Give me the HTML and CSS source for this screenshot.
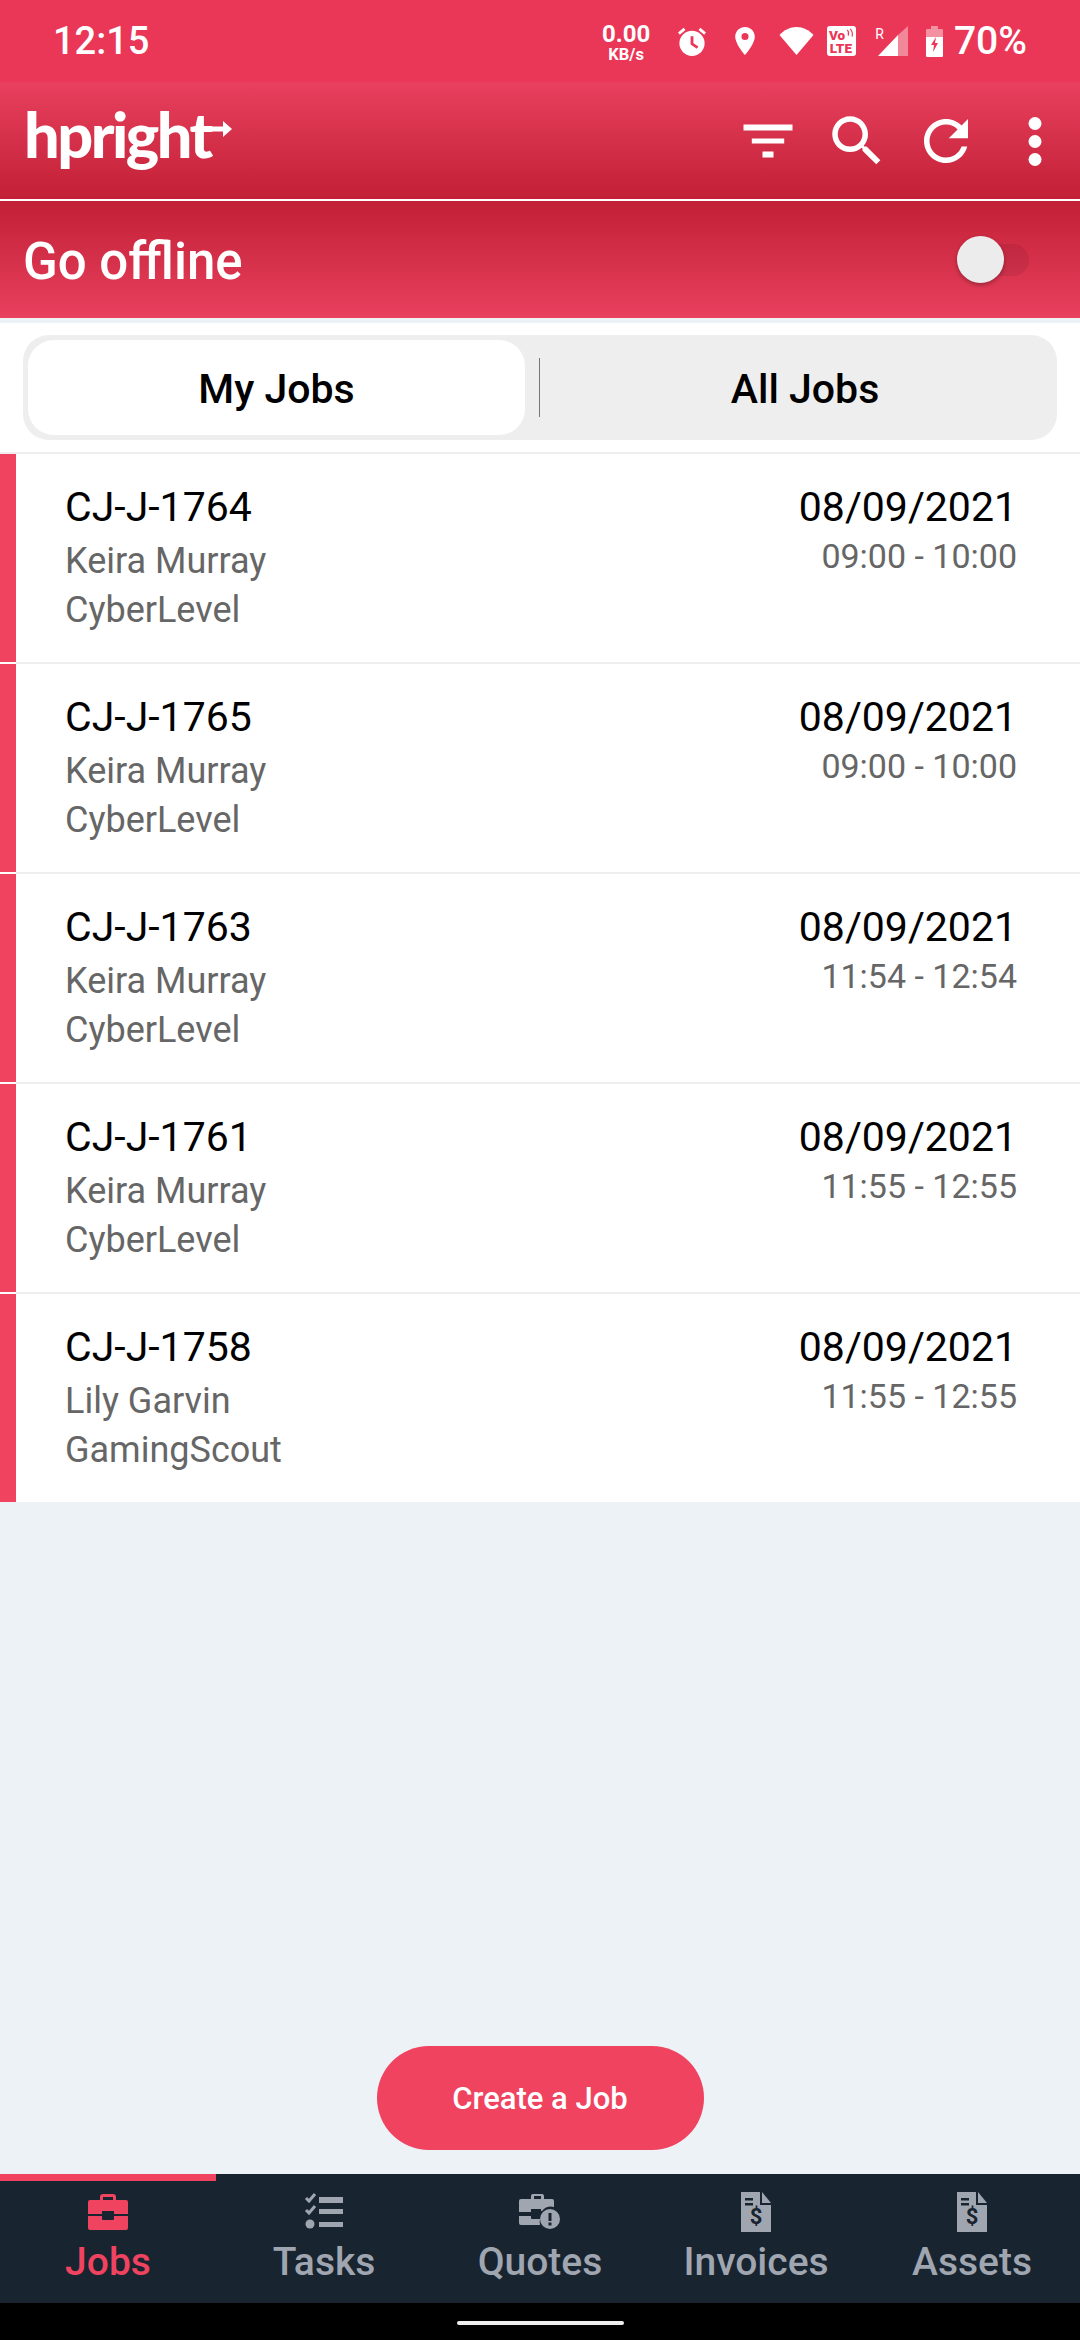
FILE: index.html
```html
<!DOCTYPE html>
<html lang="en">
<head>
    <meta charset="UTF-8">
    <meta name="viewport" content="width=device-width, initial-scale=1.0">
    <title>Jobs</title>
    <link rel="stylesheet" href="styles.css">
</head>
<body>
    <div class="app">
        <div class="status-bar">
            <span class="clock">12:15</span>
            <div class="status-icons">
                <div class="net-speed"><span class="net-value">0.00</span><span class="net-unit">KB/s</span></div>
                <svg class="st-alarm" width="28" height="29" viewBox="0 0 30 31"><circle cx="15" cy="17.500" r="13.500" fill="#fff"/><path d="M15 10v8l6 4" fill="none" stroke="#ea3757" stroke-width="3"/><path d="M1 7l6-5M29 7l-6-5" stroke="#fff" stroke-width="3" fill="none"/></svg>
                <svg class="st-pin" width="20" height="28" viewBox="0 0 21 30"><path fill-rule="evenodd" d="M10.500 0C4.700 0 0 4.600 0 10.400 0 18 10.500 30 10.500 30S21 18 21 10.400C21 4.600 16.300 0 10.500 0zm0 14a3.800 3.800 0 1 1 0-7.600 3.800 3.800 0 0 1 0 7.600z" fill="#fff"/></svg>
                <svg class="st-wifi" width="35" height="28" viewBox="0 0 34 28"><path d="M0 8C4.500 3 10.500 0 17 0s12.500 3 17 8L17 28z" fill="#fff"/></svg>
                <svg class="st-volte" width="31" height="30" viewBox="0 0 30 31"><rect width="30" height="31" rx="3" fill="#fff"/><text x="2" y="14" class="volte-text">Vo</text><path d="M21 4q2 2 1 6M24 3q3 3 2 8" stroke="#ea3757" stroke-width="1.200" fill="none"/><text x="3" y="28" class="volte-text">LTE</text></svg>
                <div class="st-signal">
                    <span class="roaming">R</span>
                    <svg width="30" height="30" viewBox="0 0 30 30"><path d="M30 0v30H20V9z" fill="#fff" opacity=".4"/><path d="M0 30L20 9v21z" fill="#fff"/></svg>
                </div>
                <svg class="st-battery" width="17" height="31" viewBox="0 0 17 31"><path d="M5 0h7v3h4a1 1 0 0 1 1 1v7H0V4a1 1 0 0 1 1-1h4z" fill="#fff" opacity=".45"/><path fill-rule="evenodd" d="M0 11h17v19a1 1 0 0 1-1 1H1a1 1 0 0 1-1-1zm10 0L5 19h3l-1 7 5-9H9z" fill="#fff"/></svg>
                <span class="battery-level">70%</span>
            </div>
        </div>

        <div class="toolbar">
            <div class="logo">
                <span class="logo-text">hpright</span>
                <svg class="logo-arrow" width="30" height="16" viewBox="0 0 30 16"><path d="M0 5.500h21V0l9 8-9 8v-5.500H0z" fill="#fff"/></svg>
            </div>
            <div class="toolbar-actions">
                <svg class="tool-icon" viewBox="0 0 66 66"><path d="M8.500 16.500h49v6h-49zM16.800 30.500h32.400v5H16.800zM27.500 43.500h11v6h-11z" fill="#fff"/></svg>
                <svg class="tool-icon" viewBox="0 0 24 24"><path d="M15.500 14h-.79l-.28-.27C15.410 12.590 16 11.110 16 9.500 16 5.910 13.090 3 9.500 3S3 5.910 3 9.500 5.910 16 9.500 16c1.610 0 3.090-.59 4.230-1.570l.27.28v.79l5 4.990L20.490 19l-4.990-5zm-6 0C7.010 14 5 11.990 5 9.500S7.010 5 9.500 5 14 7.010 14 9.500 11.990 14 9.500 14z" fill="#fff"/></svg>
                <svg class="tool-icon" viewBox="0 0 24 24"><path d="M17.650 6.350C16.200 4.900 14.210 4 12 4c-4.420 0-7.990 3.580-7.990 8s3.570 8 7.990 8c3.730 0 6.840-2.550 7.730-6h-2.080c-.82 2.330-3.040 4-5.650 4-3.310 0-6-2.690-6-6s2.690-6 6-6c1.660 0 3.140.69 4.220 1.780L13 11h7V4l-2.350 2.350z" fill="#fff"/></svg>
                <svg class="tool-icon" viewBox="0 0 66 66"><circle cx="33" cy="15.500" r="6.500" fill="#fff"/><circle cx="33" cy="33.500" r="6.500" fill="#fff"/><circle cx="33" cy="51.500" r="6.500" fill="#fff"/></svg>
            </div>
        </div>

        <div class="offline-bar">
            <span class="offline-label">Go offline</span>
            <div class="switch"><div class="switch-thumb"></div></div>
        </div>

        <div class="content">
            <div class="tabs-wrap">
                <div class="tabs">
                    <div class="tab tab-active">My Jobs</div>
                    <div class="tab-divider"></div>
                    <div class="tab tab-other">All Jobs</div>
                </div>
            </div>

            <div class="job">
                <div class="job-bar"></div>
                <div class="job-main">
                    <div class="job-left">
                        <div class="job-id">CJ-J-1764</div>
                        <div class="job-sub">Keira Murray</div>
                        <div class="job-sub">CyberLevel</div>
                    </div>
                    <div class="job-right">
                        <div class="job-date">08/09/2021</div>
                        <div class="job-time">09:00 - 10:00</div>
                    </div>
                </div>
            </div>
            <div class="job">
                <div class="job-bar"></div>
                <div class="job-main">
                    <div class="job-left">
                        <div class="job-id">CJ-J-1765</div>
                        <div class="job-sub">Keira Murray</div>
                        <div class="job-sub">CyberLevel</div>
                    </div>
                    <div class="job-right">
                        <div class="job-date">08/09/2021</div>
                        <div class="job-time">09:00 - 10:00</div>
                    </div>
                </div>
            </div>
            <div class="job">
                <div class="job-bar"></div>
                <div class="job-main">
                    <div class="job-left">
                        <div class="job-id">CJ-J-1763</div>
                        <div class="job-sub">Keira Murray</div>
                        <div class="job-sub">CyberLevel</div>
                    </div>
                    <div class="job-right">
                        <div class="job-date">08/09/2021</div>
                        <div class="job-time">11:54 - 12:54</div>
                    </div>
                </div>
            </div>
            <div class="job">
                <div class="job-bar"></div>
                <div class="job-main">
                    <div class="job-left">
                        <div class="job-id">CJ-J-1761</div>
                        <div class="job-sub">Keira Murray</div>
                        <div class="job-sub">CyberLevel</div>
                    </div>
                    <div class="job-right">
                        <div class="job-date">08/09/2021</div>
                        <div class="job-time">11:55 - 12:55</div>
                    </div>
                </div>
            </div>
            <div class="job job-last">
                <div class="job-bar"></div>
                <div class="job-main">
                    <div class="job-left">
                        <div class="job-id">CJ-J-1758</div>
                        <div class="job-sub">Lily Garvin</div>
                        <div class="job-sub">GamingScout</div>
                    </div>
                    <div class="job-right">
                        <div class="job-date">08/09/2021</div>
                        <div class="job-time">11:55 - 12:55</div>
                    </div>
                </div>
            </div>

            <button class="create-btn">Create a Job</button>
        </div>

        <nav class="bottom-nav">
            <div class="nav-item nav-active">
                <svg class="nav-icon" viewBox="0 0 42 42"><path fill-rule="evenodd" d="M13 9V6a3 3 0 0 1 3-3h10a3 3 0 0 1 3 3v3h10a2 2 0 0 1 2 2v12H27v-3H15v3H1V11a2 2 0 0 1 2-2zm3-3v3h10V6zM1 25h14v3a1 1 0 0 0 1 1h10a1 1 0 0 0 1-1v-3h14v12a2 2 0 0 1-2 2H3a2 2 0 0 1-2-2z"/></svg>
                <span class="nav-label">Jobs</span>
            </div>
            <div class="nav-item">
                <svg class="nav-icon" viewBox="0 0 42 42"><path d="M16 6h24v6H16zM16 18h24v5H16zM16 31h24v5H16z"/><path d="M3 7l3 3 6-7M3 19l3 3 6-7" fill="none" stroke-width="3" class="nav-stroke"/><circle cx="7" cy="33" r="4.500"/></svg>
                <span class="nav-label">Tasks</span>
            </div>
            <div class="nav-item">
                <svg class="nav-icon" viewBox="0 0 42 42"><path fill-rule="evenodd" d="M12 8V5a2 2 0 0 1 2-2h9a2 2 0 0 1 2 2v3h8a2 2 0 0 1 2 2v6a12 12 0 0 0-12 4h-1v-2H12v3H0V10a2 2 0 0 1 2-2zm3-3v3h7V5zM0 25h12v2a1 1 0 0 0 1 1h8a14 14 0 0 0 0 6H2a2 2 0 0 1-2-2z"/><circle cx="31" cy="28" r="10"/><rect x="29.500" y="22" width="3" height="8" class="nav-cut"/><rect x="29.500" y="31.500" width="3" height="3" class="nav-cut"/></svg>
                <span class="nav-label">Quotes</span>
            </div>
            <div class="nav-item">
                <svg class="nav-icon" viewBox="0 0 42 42"><path d="M6 1h19v13h11v27H6z"/><path d="M27 1l9 11h-9z"/><rect x="10" y="7" width="8" height="2.500" class="nav-cut"/><rect x="10" y="12" width="8" height="2.500" class="nav-cut"/><text x="21" y="33" class="nav-dollar">$</text></svg>
                <span class="nav-label">Invoices</span>
            </div>
            <div class="nav-item">
                <svg class="nav-icon" viewBox="0 0 42 42"><path d="M6 1h19v13h11v27H6z"/><path d="M27 1l9 11h-9z"/><rect x="10" y="7" width="8" height="2.500" class="nav-cut"/><rect x="10" y="12" width="8" height="2.500" class="nav-cut"/><text x="21" y="33" class="nav-dollar">$</text></svg>
                <span class="nav-label">Assets</span>
            </div>
            <div class="nav-indicator"></div>
        </nav>

        <div class="gesture-bar"><div class="gesture-pill"></div></div>
    </div>
</body>
</html>
```

FILE: styles.css
```css
* {
    box-sizing: border-box;
}
html, body {
    margin: 0;
    padding: 0;
    height: 100%;
    overflow: hidden;
}
body {
    font-family: Roboto, "Liberation Sans", sans-serif;
    background-color: #edf2f6;
}
.app {
    display: flex;
    flex-direction: column;
    width: 1080px;
    height: 2340px;
}

/* status bar */
.status-bar {
    display: flex;
    align-items: center;
    justify-content: space-between;
    height: 82px;
    padding: 0 53px 0 53px;
    background-color: #ea3757;
    color: #fff;
}
.clock {
    font-size: 38px;
    font-weight: 500;
}
.status-icons {
    display: flex;
    align-items: center;
}
.net-speed {
    display: flex;
    flex-direction: column;
    align-items: center;
    font-weight: 700;
    margin-top: 3px;
}
.net-value {
    font-size: 24px;
    line-height: 24px;
}
.net-unit {
    font-size: 16.500px;
    line-height: 17px;
}
.st-alarm {
    margin-left: 28px;
}
.st-pin {
    margin-left: 29px;
}
.st-wifi {
    margin-left: 24px;
}
.st-volte {
    margin-left: 12px;
}
.volte-text {
    font-family: Roboto, sans-serif;
    font-size: 14px;
    font-weight: 900;
    fill: #ea3757;
}
.st-signal {
    display: flex;
    align-items: flex-start;
    margin-left: 18px;
}
.st-signal svg {
    display: block;
    margin-left: -6px;
}
.roaming {
    font-size: 14px;
    line-height: 16px;
}
.st-battery {
    margin-left: 18px;
}
.battery-level {
    margin-left: 11px;
    font-size: 39px;
    font-weight: 500;
}

/* toolbar */
.toolbar {
    display: flex;
    align-items: center;
    justify-content: space-between;
    height: 119px;
    padding: 0 12px 0 24px;
    border-bottom: 2px solid #fff;
    background: linear-gradient(#e8405e, #c22036);
}
.logo {
    display: flex;
    align-items: flex-start;
    margin-bottom: 14px;
    color: #fff;
}
.logo-text {
    font-family: Lato, sans-serif;
    font-size: 63px;
    font-weight: 900;
    line-height: 70px;
    letter-spacing: -2.500px;
}
.logo-arrow {
    margin: 22px 0 0 -9px;
}
.toolbar-actions {
    display: flex;
    gap: 23px;
}
.tool-icon {
    display: block;
    width: 66px;
    height: 66px;
}

/* offline bar */
.offline-bar {
    display: flex;
    align-items: center;
    justify-content: space-between;
    height: 117px;
    padding: 0 51px 0 23px;
    background: linear-gradient(#c22036, #e8405e);
}
.offline-label {
    padding-top: 3px;
    color: #fff;
    font-size: 51px;
    font-weight: 500;
}
.switch {
    position: relative;
    width: 72px;
    height: 32px;
    border-radius: 16px;
    background-color: rgba(0, 0, 0, 0.07);
}
.switch-thumb {
    position: absolute;
    top: -8px;
    left: 0;
    width: 47px;
    height: 47px;
    border-radius: 50%;
    background-color: #ececec;
    box-shadow: 0 2px 4px rgba(0, 0, 0, 0.3);
}

/* tabs */
.content {
    flex: 1;
    display: flex;
    flex-direction: column;
    border-top: 5px solid #edf2f6;
}
.tabs-wrap {
    padding: 12px 23px;
    background-color: #fff;
    border-bottom: 2px solid #eee;
}
.tabs {
    display: flex;
    align-items: center;
    height: 105px;
    padding: 5px;
    border-radius: 26px;
    background-color: #eee;
}
.tab {
    flex: 1;
    display: flex;
    align-items: center;
    justify-content: center;
    height: 95px;
    padding-top: 2px;
    font-size: 41px;
    font-weight: 500;
    color: #000;
}
.tab-active {
    flex: none;
    width: 497px;
    border-radius: 26px;
    background-color: #fff;
}
.tab-divider {
    width: 1px;
    height: 59px;
    margin-left: 14px;
    background-color: #777;
}
.tab-other {
    padding-left: 18px;
}

/* job list */
.job {
    display: flex;
    height: 210px;
    background-color: #fff;
}
.job-bar {
    width: 16px;
    margin-bottom: 2px;
    background-color: #f0435f;
}
.job-main {
    flex: 1;
    display: flex;
    justify-content: space-between;
    padding: 30px 63px 0 49px;
    border-bottom: 2px solid #eee;
}
.job-last {
    height: 208px;
}
.job-last .job-bar {
    margin-bottom: 0;
}
.job-last .job-main {
    border-bottom: none;
}
.job-id, .job-date {
    font-size: 41px;
    line-height: 46px;
    color: #000;
}
.job-sub {
    font-size: 36px;
    line-height: 49px;
    color: #666;
}
.job-id + .job-sub {
    margin-top: 7px;
}
.job-right {
    text-align: right;
}
.job-time {
    margin-top: 6px;
    font-size: 34px;
    line-height: 40px;
    color: #666;
}

/* button */
.create-btn {
    align-self: center;
    width: 327px;
    height: 104px;
    margin: auto 0 24px;
    border: none;
    border-radius: 52px;
    background-color: #f0435f;
    color: #fff;
    font-family: Roboto, sans-serif;
    font-size: 31px;
    font-weight: 500;
}

/* bottom nav */
.bottom-nav {
    position: relative;
    display: flex;
    height: 129px;
    background-color: #182430;
}
.nav-item {
    flex: 1;
    display: flex;
    flex-direction: column;
    align-items: center;
    padding-top: 17px;
    color: #a0a6b0;
    fill: #a0a6b0;
}
.nav-active {
    color: #f0435f;
    fill: #f0435f;
}
.nav-icon {
    display: block;
    width: 42px;
    height: 42px;
}
.nav-stroke {
    stroke: #a0a6b0;
}
.nav-cut {
    fill: #182430;
}
.nav-dollar {
    font-family: Roboto, sans-serif;
    font-size: 22px;
    font-weight: 700;
    fill: #182430;
    text-anchor: middle;
}
.nav-label {
    margin-top: 6px;
    font-size: 39px;
    font-weight: 500;
    line-height: 46px;
}
.nav-indicator {
    position: absolute;
    top: 0;
    left: 0;
    width: 216px;
    height: 7px;
    background-color: #f0435f;
}

.gesture-bar {
    display: flex;
    justify-content: center;
    height: 37px;
    padding-top: 18px;
    background-color: #000;
}
.gesture-pill {
    width: 167px;
    height: 4px;
    border-radius: 2px;
    background-color: #eee;
}
```
